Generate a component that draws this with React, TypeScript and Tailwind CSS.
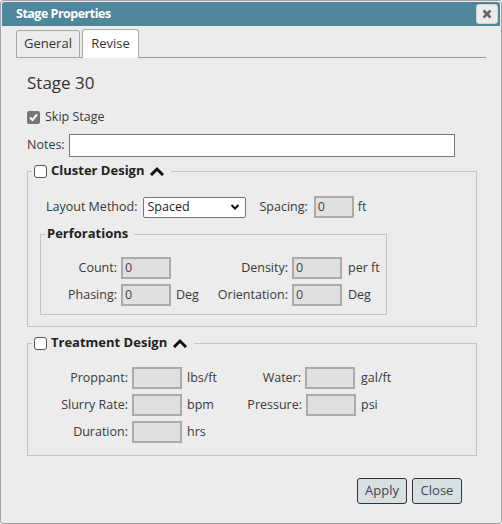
import React from "react";

const font = { fontFamily: '"Open Sans", "Noto Sans", sans-serif' };

function Caret() {
  return (
    <svg width="14" height="10" viewBox="0 0 14 10" className="ml-[6px]">
      <polyline points="2,8 7,3 12,8" fill="none" stroke="#111" strokeWidth="3" strokeLinecap="square" />
    </svg>
  );
}

function Box({ checked = false }: { checked?: boolean }) {
  if (checked) {
    return (
      <span className="inline-flex h-[13px] w-[13px] items-center justify-center rounded-[2px] bg-[#767676]">
        <svg width="11" height="11" viewBox="0 0 11 11">
          <polyline points="2,5.5 4.5,8 9,2.5" fill="none" stroke="#fff" strokeWidth="2" />
        </svg>
      </span>
    );
  }
  return <span className="inline-block h-[13px] w-[13px] rounded-[3px] border border-[#555] bg-white" />;
}

function DisInput({ value = "", w = "w-[50px]" }: { value?: string; w?: string }) {
  return (
    <div className={`${w} h-[22px] border-2 border-[#ababab] bg-[#e0e0e0] pl-[2px] text-[12.5px] leading-[18px] text-[#444]`}>
      {value}
    </div>
  );
}

export default function App() {
  return (
    <div style={font} className="h-[524px] w-[502px] text-[12.5px] text-[#3a3a3a]">
      <div className="flex h-[524px] w-[502px] flex-col rounded-[3px] border border-[#a3a3a3] bg-[#ebeceb] p-[1px]">
        {/* title bar */}
        <div className="flex h-[24px] items-center justify-between rounded-t-[3px] bg-[#4e879b] pl-[14px] pr-[2px]">
          <span className="text-[12.5px] font-bold tracking-[-0.5px] text-white">Stage Properties</span>
          <div className="flex h-[20px] w-[22px] items-center justify-center rounded-[3px] border border-[#d0d0d0] bg-[#ebebeb]">
            <svg width="10" height="10" viewBox="0 0 10 10">
              <line x1="1.5" y1="1.5" x2="8.5" y2="8.5" stroke="#666" strokeWidth="2.6" />
              <line x1="8.5" y1="1.5" x2="1.5" y2="8.5" stroke="#666" strokeWidth="2.6" />
            </svg>
          </div>
        </div>

        {/* tabs */}
        <div className="mx-[14px] mt-[3px] flex items-end border-b border-[#9a9a9a] pl-[0px]">
          <div className="mb-[-1px] flex h-[28px] w-[64px] items-center justify-center rounded-t-[3px] border border-[#a9a9a9] bg-[#ececec] text-[13px] text-[#333]">
            General
          </div>
          <div className="mb-[-1px] ml-[2px] flex h-[29px] w-[57px] items-center justify-center rounded-t-[3px] border border-b-0 border-[#a9a9a9] bg-white text-[13px] text-[#333]">
            Revise
          </div>
        </div>

        <div className="flex flex-col pl-[25px] pr-[25px]">
          <div className="mt-[13px] h-[24px] text-[17px] leading-[24px] text-[#333]">Stage 30</div>

          <div className="mt-[13px] flex h-[18px] items-center">
            <Box checked />
            <span className="ml-[5px]">Skip Stage</span>
          </div>

          <div className="mt-[8px] flex h-[23px] items-center">
            <span>Notes:</span>
            <div className="ml-[4px] h-[23px] w-[386px] border border-[#767676] bg-white" />
          </div>

          {/* Cluster Design */}
          <fieldset className="mt-[5px] w-[450px] border border-[#c4c4c4] px-0 pb-[11px] pt-0">
            <legend className="ml-[4px] flex h-[18px] items-center pl-[2px] pr-[7px]">
              <Box />
              <span className="ml-[4px] text-[13px] font-bold text-[#222]">Cluster Design</span>
              <Caret />
            </legend>

            <div className="mt-[16px] flex h-[22px] items-center pl-[18px]">
              <span>Layout Method:</span>
              <div className="ml-[6px] flex h-[21px] w-[103px] items-center justify-between rounded-[2px] border border-[#767676] bg-white pl-[3px] pr-[5px]">
                <span className="text-[12.5px] text-[#222]">Spaced</span>
                <svg width="10" height="8" viewBox="0 0 10 8">
                  <polyline points="1.5,2 5,5.5 8.5,2" fill="none" stroke="#111" strokeWidth="2" />
                </svg>
              </div>
              <span className="ml-[13px]">Spacing:</span>
              <div className="ml-[6px]">
                <DisInput value="0" w="w-[40px]" />
              </div>
              <span className="ml-[4px]">ft</span>
            </div>

            {/* Perforations */}
            <fieldset className="ml-[12px] mt-[7px] w-[347px] border border-[#c4c4c4] px-0 pb-[8px] pt-0">
              <legend className="ml-[4px] flex h-[18px] items-center pl-[2px] pr-[6px]">
                <span className="text-[13px] font-bold text-[#222]">Perforations</span>
              </legend>
              <div className="mt-[14px] flex flex-col gap-[5px]">
                <div className="flex h-[22px] items-center">
                  <span className="w-[80px] pr-[4px] text-right">Count:</span>
                  <DisInput value="0" />
                  <span className="flex w-[121px] justify-between pl-[5px] pr-[4px]">
                    <span></span>
                    <span>Density:</span>
                  </span>
                  <DisInput value="0" />
                  <span className="pl-[6px]">per ft</span>
                </div>
                <div className="flex h-[22px] items-center">
                  <span className="w-[80px] pr-[4px] text-right">Phasing:</span>
                  <DisInput value="0" />
                  <span className="flex w-[121px] justify-between pl-[5px] pr-[4px]">
                    <span>Deg</span>
                    <span>Orientation:</span>
                  </span>
                  <DisInput value="0" />
                  <span className="pl-[6px]">Deg</span>
                </div>
              </div>
            </fieldset>
          </fieldset>

          {/* Treatment Design */}
          <fieldset className="mt-[7px] w-[450px] border border-[#c4c4c4] px-0 pb-[12px] pt-0">
            <legend className="ml-[4px] flex h-[18px] items-center pl-[2px] pr-[7px]">
              <Box />
              <span className="ml-[4px] text-[13px] font-bold text-[#222]">Treatment Design</span>
              <Caret />
            </legend>
            <div className="mt-[15px] flex flex-col gap-[5px]">
              <div className="flex h-[22px] items-center">
                <span className="w-[104px] pr-[4px] text-right">Proppant:</span>
                <DisInput />
                <span className="flex w-[123px] justify-between pl-[5px] pr-[4px]">
                  <span>lbs/ft</span>
                  <span>Water:</span>
                </span>
                <DisInput />
                <span className="pl-[6px]">gal/ft</span>
              </div>
              <div className="flex h-[22px] items-center">
                <span className="w-[104px] pr-[4px] text-right">Slurry Rate:</span>
                <DisInput />
                <span className="flex w-[124px] justify-between pl-[5px] pr-[4px]">
                  <span>bpm</span>
                  <span>Pressure:</span>
                </span>
                <DisInput />
                <span className="pl-[5px]">psi</span>
              </div>
              <div className="flex h-[22px] items-center">
                <span className="w-[104px] pr-[4px] text-right">Duration:</span>
                <DisInput />
                <span className="pl-[5px]">hrs</span>
              </div>
            </div>
          </fieldset>

          <div className="mt-[22px] flex justify-end gap-[5px] pr-[13px]">
            <div className="flex h-[26px] w-[50px] items-center justify-center rounded-[3px] border border-[#333] bg-[#d6e0e3] text-[13px] text-[#444]">
              Apply
            </div>
            <div className="flex h-[26px] w-[50px] items-center justify-center rounded-[3px] border border-[#333] bg-[#d6e0e3] text-[13px] text-[#444]">
              Close
            </div>
          </div>
        </div>
      </div>
    </div>
  );
}
